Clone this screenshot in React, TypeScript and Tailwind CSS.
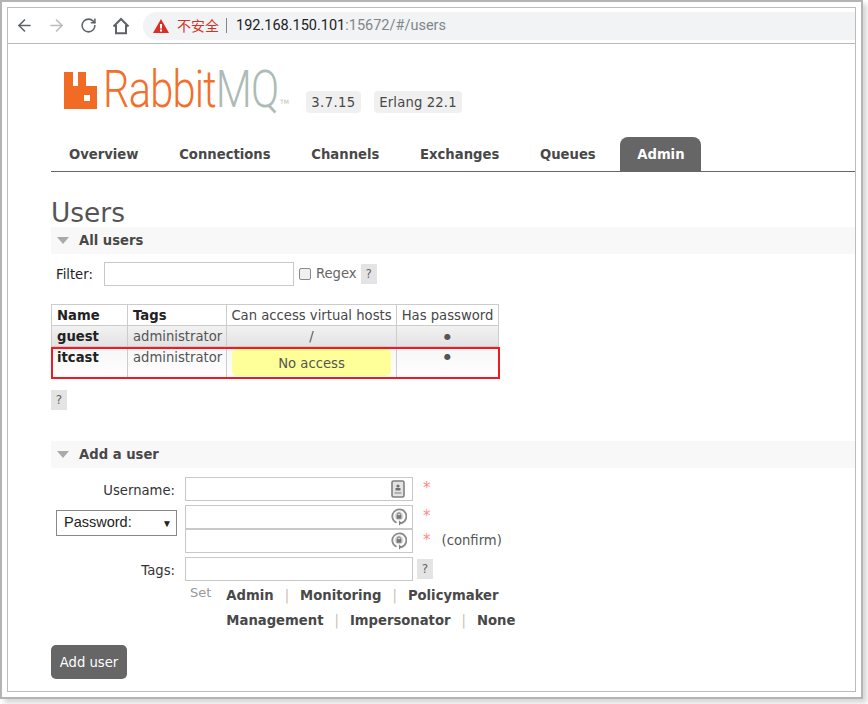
import { ArrowLeft, ArrowRight, RotateCw } from "lucide-react";

const fontUi = "font-['DejaVu_Sans',Verdana,sans-serif]";

function Help({ className = "" }: { className?: string }) {
  return (
    <span className={`flex h-[20px] w-[16px] items-center justify-center bg-[#e4e4e4] text-[12px] text-[#666] ${className}`}>
      ?
    </span>
  );
}

function SectionHeader({ title }: { title: string }) {
  return (
    <div className="flex h-[27px] items-center bg-[#f8f8f8] pl-[6px]">
      <span className="h-0 w-0 border-x-[6px] border-t-[7px] border-x-transparent border-t-[#aaa]" />
      <span className="ml-[10px] text-[13.2px] font-bold text-[#484848]">{title}</span>
    </div>
  );
}

function ContactIcon() {
  return (
    <svg width="14" height="18" viewBox="0 0 14 18" className="absolute right-[7px] top-[2px]">
      <rect x="1" y="1" width="12" height="16" rx="1.5" fill="#e4e4e4" stroke="#808080" strokeWidth="1.6" />
      <circle cx="7" cy="6" r="1.6" fill="#707070" />
      <rect x="4.5" y="8" width="5" height="2.5" fill="#707070" />
      <rect x="3.5" y="12" width="7" height="2" fill="#b0b0b0" />
    </svg>
  );
}

function KeyIcon() {
  return (
    <svg width="16" height="20" viewBox="0 0 16 20" className="absolute right-[5px] top-[1px]">
      <path d="M10 16.2A7 7 0 1 0 5.5 15.8" fill="none" stroke="#8a8a8a" strokeWidth="1.8" />
      <path d="M8 13.5v5l3-2.6z" fill="#808080" />
      <circle cx="8" cy="9" r="4.4" fill="#d8d8d8" />
      <rect x="5.6" y="8.2" width="4.8" height="3.6" fill="#777" />
      <circle cx="8" cy="7.6" r="1.7" fill="none" stroke="#777" />
    </svg>
  );
}

function TextField({ icon, className = "" }: { icon?: "contact" | "key"; className?: string }) {
  return (
    <div className={`relative h-[24px] w-[228px] border border-[#c8c8c8] ${className}`}>
      {icon === "contact" && <ContactIcon />}
      {icon === "key" && <KeyIcon />}
    </div>
  );
}

function Star() {
  return <span className="pb-[2px] text-[15px] leading-none text-[#ff8a8a]">*</span>;
}

function TagLinks({ items }: { items: string[] }) {
  return (
    <div className="flex items-center text-[13.2px] font-bold text-[#484848]">
      {items.map((item, i) => (
        <span key={item} className="flex items-center">
          {i > 0 && <span className="mx-[11px] font-normal text-[#c8bfb0]">|</span>}
          {item}
        </span>
      ))}
    </div>
  );
}

export default function App() {
  const tabs = ["Overview", "Connections", "Channels", "Exchanges", "Queues"];

  return (
    <div className={`h-[704px] w-[868px] overflow-hidden bg-white ${fontUi}`}>
      <div className="h-[699px] w-[863px] border-2 border-[#b4b4b4] p-[5px] shadow-[4px_4px_5px_rgba(0,0,0,0.16)]">
        <div className="h-full overflow-hidden border border-[#bcbcbc]">
          {/* browser toolbar */}
          <div className="flex h-[36px] items-center border-b border-[#b8b8b8] pl-[7px]">
            <ArrowLeft size={19} strokeWidth={2} className="text-[#5f6368]" />
            <ArrowRight size={19} strokeWidth={2} className="ml-[13px] text-[#b9bbbe]" />
            <RotateCw size={17} strokeWidth={2.2} className="ml-[14px] text-[#5f6368]" />
            <svg width="18" height="18" viewBox="0 0 18 18" className="ml-[15px]">
              <path d="M1.5 9.5 9 2l7.5 7.5M4 8v8.2h10V8" fill="none" stroke="#5f6368" strokeWidth="2" />
            </svg>
            <div className="ml-[13px] flex h-[28px] flex-1 items-center rounded-l-full bg-[#f1f3f4] pl-[10px] font-['Roboto',sans-serif] text-[14.5px]">
              <svg width="16" height="14" viewBox="0 0 16 14">
                <path d="M8 0 16 14H0z" fill="#d93025" />
                <rect x="7" y="5" width="2" height="4.5" fill="#fff" />
                <rect x="7" y="10.5" width="2" height="2" fill="#fff" />
              </svg>
              <span className="ml-[8px] font-['Noto_Sans_CJK_SC',sans-serif] text-[14px] text-[#d93025]">不安全</span>
              <span className="ml-[7px] mr-[9px] h-[15px] w-px bg-[#80868b]" />
              <span className="text-[#202124]">192.168.150.101</span>
              <span className="text-[#80868b]">:15672/#/users</span>
            </div>
          </div>

          {/* page */}
          <div className="pl-[43px]">
            <div className="flex h-[93px] items-start pl-[13px]">
              <div className="relative mt-[21px] flex h-[50px] w-[242px] items-center">
                <svg width="33" height="37" viewBox="0 0 33 37" className="shrink-0">
                  <path
                    fillRule="evenodd"
                    d="M0 0h9v14h5V0h8v14h11v23H0zM20 23v6h6v-6z"
                    fill="#f26b25"
                  />
                </svg>
                <span className="ml-[6px] inline-block origin-left scale-x-[0.8] whitespace-nowrap font-['Roboto',sans-serif] text-[52px] font-light leading-none tracking-[-1px] text-[#f0702c]">
                  Rabbit<span className="text-[#acbbb5]">MQ</span>
                </span>
                <span className="absolute left-[216px] top-[34px] text-[6px] leading-none text-[#bbb]">TM</span>
              </div>
              <span className="ml-0 mt-[47px] flex h-[22px] w-[55px] items-center justify-center rounded-[4px] bg-[#f0f0f0] pt-[1px] text-[13.2px] tracking-[0.4px] text-[#484848]">
                3.7.15
              </span>
              <span className="ml-[13px] mt-[47px] flex h-[22px] w-[88px] items-center justify-center rounded-[4px] bg-[#f0f0f0] pt-[1px] text-[13.2px] tracking-[0.15px] text-[#484848]">
                Erlang 22.1
              </span>
            </div>

            <div className="flex h-[35px] items-stretch border-b border-[#666] pl-[18px] text-[13.2px] font-bold text-[#484848]">
              {tabs.map((tab) => (
                <span key={tab} className="mr-[40.7px] flex items-center pt-[1px]">
                  {tab}
                </span>
              ))}
              <span className="ml-[-16px] flex w-[81px] items-center justify-center rounded-t-[8px] bg-[#666] pt-[2px] text-white">
                Admin
              </span>
            </div>

            <h1 className="mt-[25px] h-[30px] text-[26.4px] leading-[31px] font-normal text-[#555]">Users</h1>
            <SectionHeader title="All users" />

            <div className="mt-[8px] flex h-[24px] items-center pl-[5px] text-[13.2px]">
              <span className="pt-[1px] text-[#222]">Filter:</span>
              <div className="ml-[11px] h-[24px] w-[190px] border border-[#c8c8c8]" />
              <span className="ml-[5px] h-[12px] w-[12px] rounded-[2px] border border-[#8a8a8a] bg-[#f0f0f0]" />
              <span className="ml-[5px] text-[#666]">Regex</span>
              <Help className="ml-[4px]" />
            </div>

            <div className="relative mt-[18px] w-[449px]">
              <table className="w-[447px] table-fixed border-collapse text-[13.2px] leading-[17px] text-[#555]">
                <colgroup>
                  <col className="w-[76px]" />
                  <col className="w-[99px]" />
                  <col className="w-[170px]" />
                  <col className="w-[102px]" />
                </colgroup>
                <thead>
                  <tr className="h-[21px]">
                    <th className="border border-[#ccc] pl-[5px] text-left font-bold text-[#222]">Name</th>
                    <th className="border border-[#ccc] pl-[5px] text-left font-bold text-[#222]">Tags</th>
                    <th className="border border-[#ccc] text-center font-normal text-[#484848]">Can access virtual hosts</th>
                    <th className="border border-[#ccc] text-center font-normal text-[#484848]">Has password</th>
                  </tr>
                </thead>
                <tbody>
                  <tr className="h-[21px] bg-gradient-to-b from-[#f2f2f2] to-[#e2e2e2]">
                    <td className="border border-[#ccc] pl-[5px] font-bold text-[#222]">guest</td>
                    <td className="border border-[#ccc] pl-[5px]">administrator</td>
                    <td className="border border-[#ccc] text-center">/</td>
                    <td className="border border-[#ccc] pt-[1px] text-center text-[8px] leading-[10px]">●</td>
                  </tr>
                  <tr className="h-[31px] bg-gradient-to-b from-[#f6f6f6] to-[#ffffff]">
                    <td className="border border-[#ccc] pb-[10px] pl-[5px] font-bold text-[#222]">itcast</td>
                    <td className="border border-[#ccc] pb-[10px] pl-[5px]">administrator</td>
                    <td className="border border-[#ccc] px-[5px] text-center">
                      <div className="flex h-[27px] items-center justify-center rounded-[5px] bg-[#ffff99] pt-[3px]">No access</div>
                    </td>
                    <td className="border border-[#ccc] pb-[10px] text-center text-[8px] leading-[10px]">●</td>
                  </tr>
                </tbody>
              </table>
              <div className="absolute bottom-[-1px] left-0 h-[32px] w-[449px] border-2 border-[#ed1c24]" />
            </div>

            <Help className="mt-[12px]" />

            <div className="mt-[31px]">
              <SectionHeader title="Add a user" />
            </div>

            <div className="mt-[9px] flex text-[13.2px] text-[#333]">
              <div className="flex w-[134px] flex-col items-end pr-[10px]">
                <span className="mt-[5px] h-[24px] leading-[18px]">Username:</span>
                <span className="ml-[5px] mt-[4px] flex h-[26px] w-[121px] items-center self-start border border-[#888] bg-white pl-[7px] font-['Liberation_Sans',sans-serif] text-[14.5px] text-[#222]">
                  Password:
                  <span className="ml-auto mr-[4px] text-[10px]">▼</span>
                </span>
                <span className="mt-[26px] leading-[18px]">Tags:</span>
              </div>
              <div className="w-[228px]">
                <TextField icon="contact" />
                <TextField icon="key" className="mt-[4px]" />
                <TextField icon="key" />
                <TextField className="mt-[4px]" />
              </div>
              <div className="ml-[10px] flex flex-col">
                <span className="flex h-[24px] items-center"><Star /></span>
                <span className="mt-[4px] flex h-[24px] items-center"><Star /></span>
                <span className="flex h-[24px] items-center">
                  <Star />
                  <span className="ml-[11px] text-[#555]">(confirm)</span>
                </span>
                <Help className="ml-[-6px] mt-[6px]" />
              </div>
            </div>

            <div className="mt-[2px] flex">
              <span className="ml-[139px] text-[13px] text-[#999]">Set</span>
              <div className="ml-[15px] mt-[3px] flex flex-col gap-[5px]">
                <TagLinks items={["Admin", "Monitoring", "Policymaker"]} />
                <TagLinks items={["Management", "Impersonator", "None"]} />
              </div>
            </div>

            <button className="mt-[14px] flex h-[34px] w-[76px] items-center justify-center rounded-[5px] bg-[#666] pt-[2px] text-[13.2px] text-white">
              Add user
            </button>
          </div>
        </div>
      </div>
    </div>
  );
}
